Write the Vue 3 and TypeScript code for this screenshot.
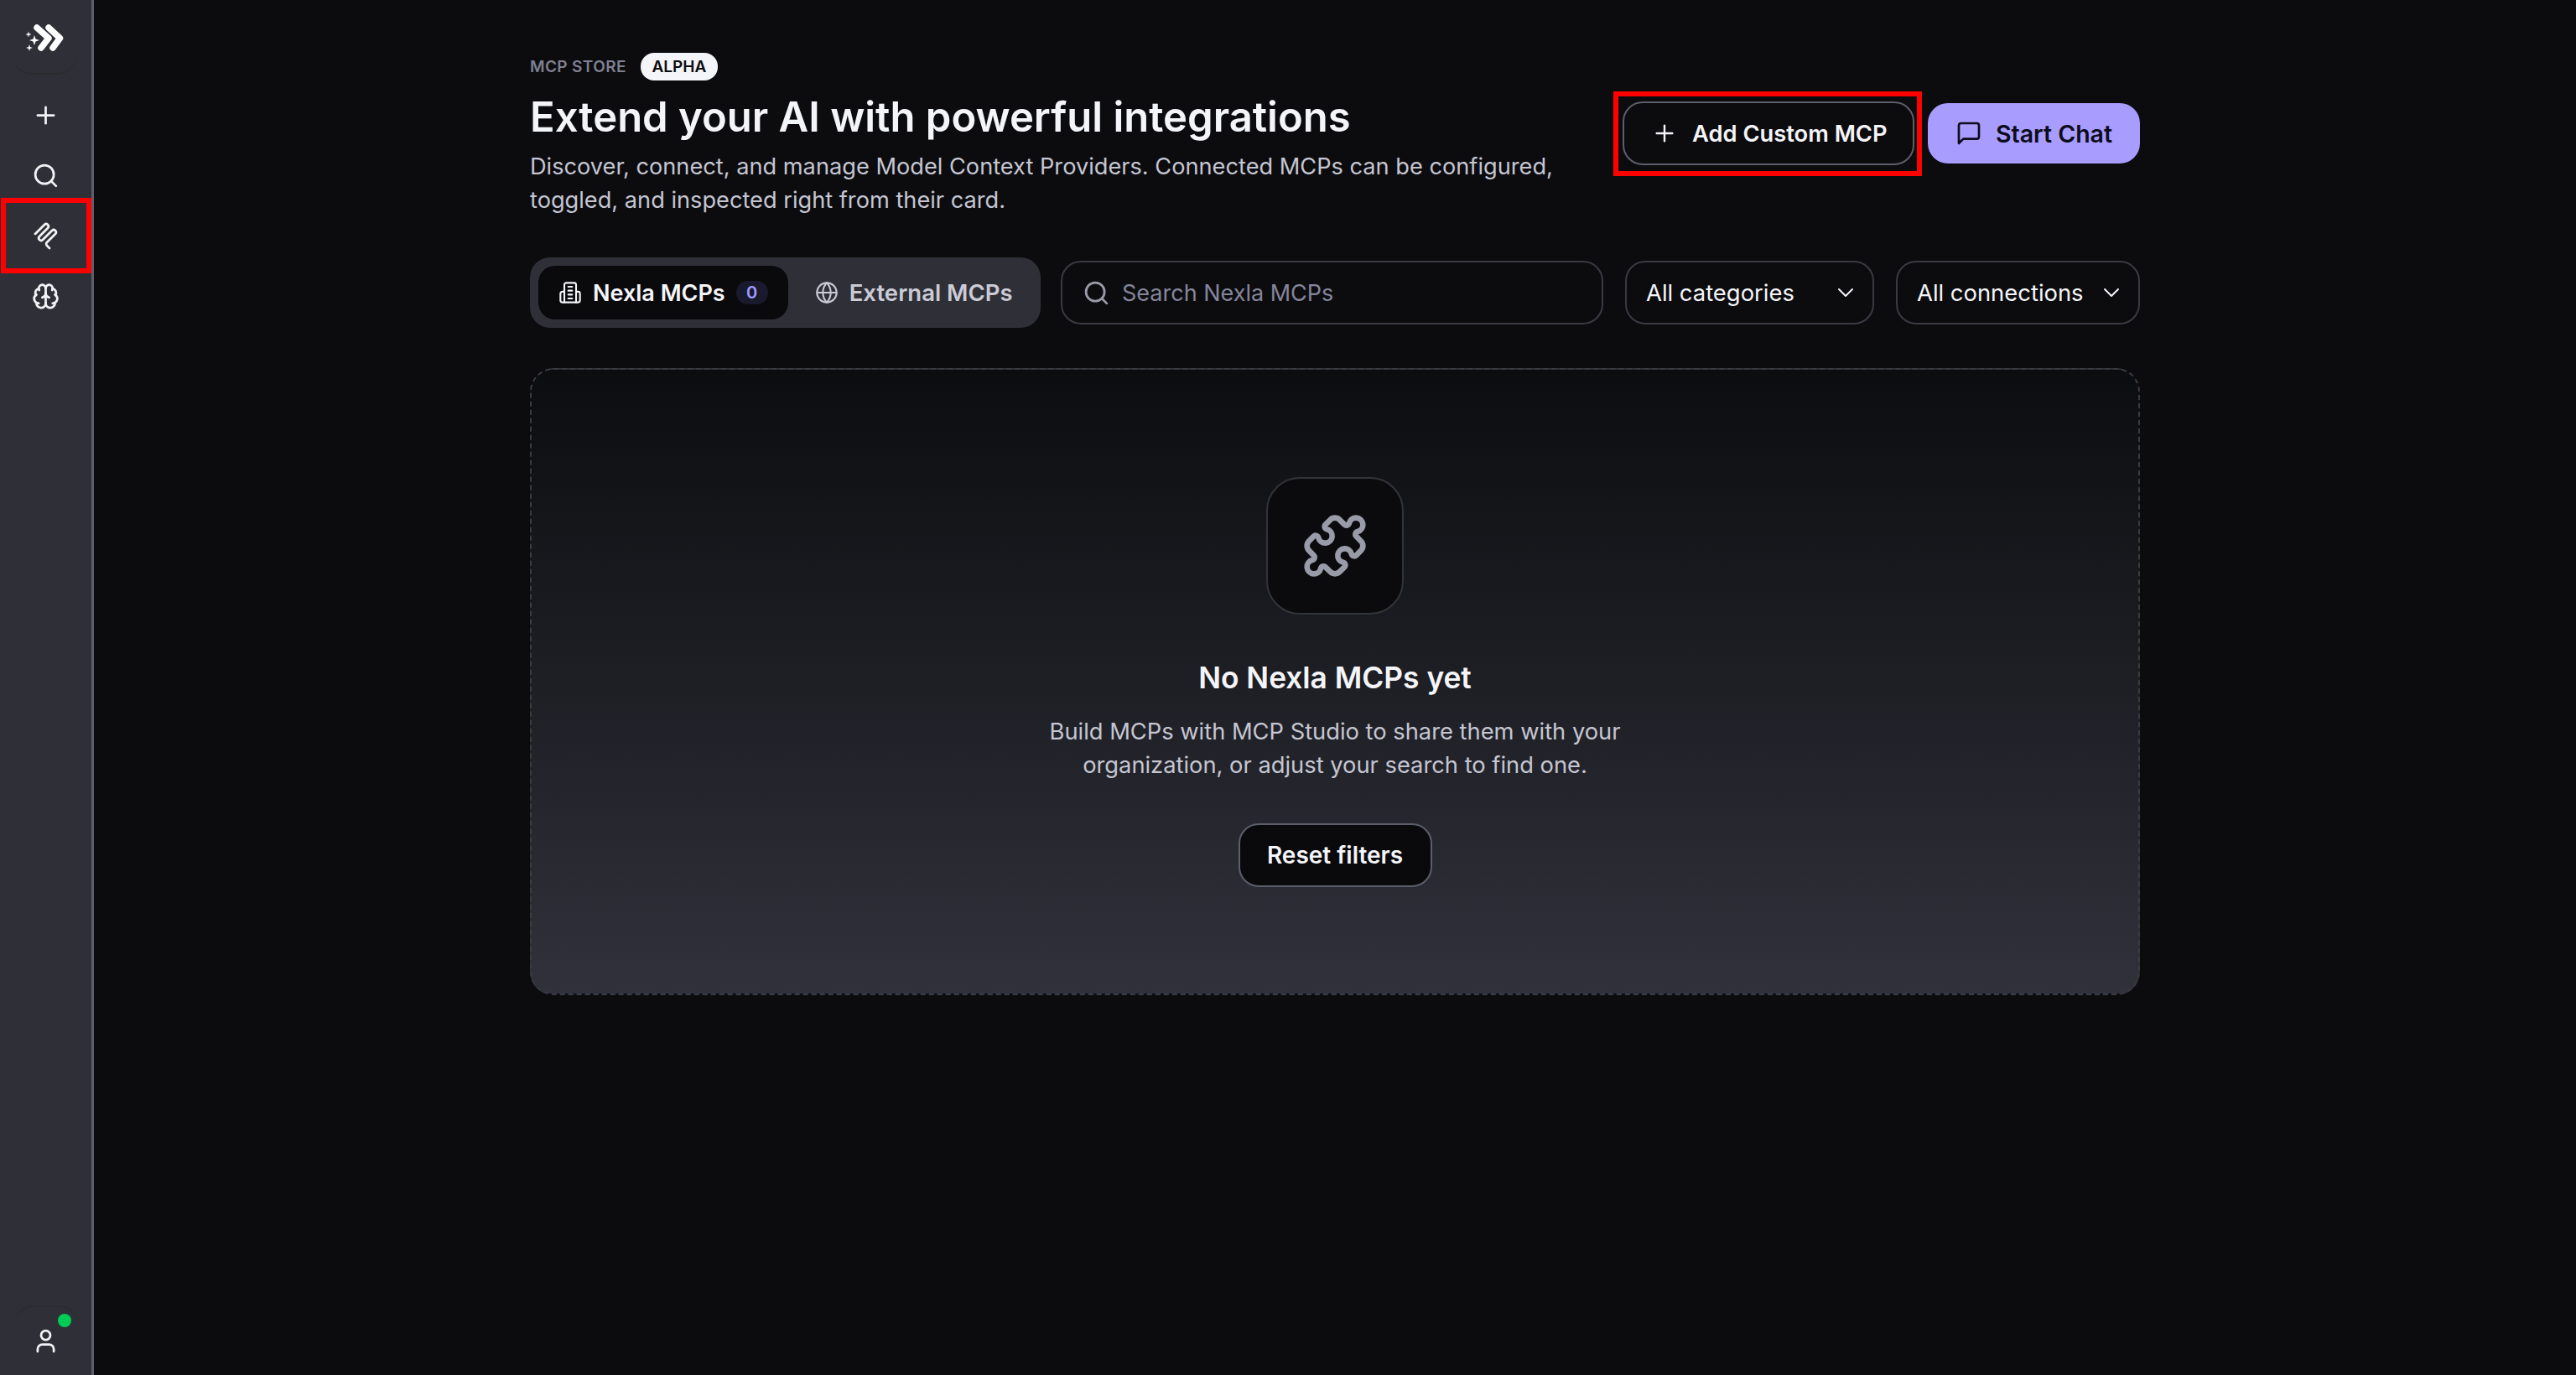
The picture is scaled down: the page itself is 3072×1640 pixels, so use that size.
<script setup lang="ts">
import { ref } from 'vue'

const search = ref('')
const navIcons = ['plus', 'search', 'mcp', 'brain']
</script>

<template>
  <div class="app-shell">
    <aside class="sidebar">
      <div class="logo-wrap">
        <svg class="logo" viewBox="0 0 46 34" fill="none">
          <path d="M14 5 L28 17.5 L19 29" stroke="#fff" stroke-width="7.5" stroke-linejoin="round" stroke-linecap="round" />
          <path d="M28 5 L41.5 17.5 L33 29" stroke="#fff" stroke-width="7.5" stroke-linejoin="round" stroke-linecap="round" />
          <path d="M11 14 L12.5 18.5 L17 20 L12.5 21.5 L11 26 L9.5 21.5 L5 20 L9.5 18.5 Z" fill="#fff" />
          <path d="M4 9.5 L4.8 12 L7.5 13 L4.8 14 L4 16.5 L3.2 14 L0.5 13 L3.2 12 Z" fill="#fff" />
          <path d="M5 25 L6 28 L9 29 L6 30 L5 33 L4 30 L1 29 L4 28 Z" fill="#fff" />
        </svg>
      </div>
      <nav class="nav">
        <button v-for="icon in navIcons" :key="icon" class="nav-item">
          <svg v-if="icon === 'plus'" class="nav-icon" viewBox="0 0 24 24">
            <path d="M5 12h14" /><path d="M12 5v14" />
          </svg>
          <svg v-else-if="icon === 'search'" class="nav-icon" viewBox="0 0 24 24">
            <circle cx="11" cy="11" r="8" /><path d="m21 21-4.3-4.3" />
          </svg>
          <svg v-else-if="icon === 'mcp'" class="nav-mcp" viewBox="0 0 30 33">
            <path d="M2 14 L13 3 A2.83 2.83 0 0 1 17 7 L7 17 A2.83 2.83 0 0 0 11 21 L22 10 A2.83 2.83 0 0 1 26 14 L16 24 A2.83 2.83 0 0 0 16 28 L19 31" />
          </svg>
          <svg v-else class="nav-icon" viewBox="0 0 24 24">
            <path d="M12 18V5" />
            <path d="M15 13a4.17 4.17 0 0 1-3-4 4.17 4.17 0 0 1-3 4" />
            <path d="M17.598 6.5A3 3 0 1 0 12 5a3 3 0 1 0-5.598 1.5" />
            <path d="M17.997 5.125a4 4 0 0 1 2.526 5.77" />
            <path d="M18 18a4 4 0 0 0 2-7.464" />
            <path d="M19.967 17.483A4 4 0 1 1 12 18a4 4 0 1 1-7.967-.517" />
            <path d="M6 18a4 4 0 0 1-2-7.464" />
            <path d="M6.003 5.125a4 4 0 0 0-2.526 5.77" />
          </svg>
          <span v-if="icon === 'mcp'" class="mark mark-nav"></span>
        </button>
      </nav>
      <div class="user-wrap">
        <span class="status-dot"></span>
        <svg class="nav-icon" viewBox="0 0 24 24">
          <path d="M19 21v-2a4 4 0 0 0-4-4H9a4 4 0 0 0-4 4v2" /><circle cx="12" cy="7" r="4" />
        </svg>
      </div>
    </aside>

    <main class="main">
      <div class="content">
        <header class="page-header">
          <div class="intro">
            <div class="eyebrow">
              <span class="eyebrow-text">MCP Store</span>
              <span class="alpha">ALPHA</span>
            </div>
            <h1>Extend your AI with powerful integrations</h1>
            <p>Discover, connect, and manage Model Context Providers. Connected MCPs can be configured, toggled, and inspected right from their card.</p>
          </div>
          <div class="actions">
            <button class="btn btn-outline">
              <span class="mark mark-add"></span>
              <svg class="btn-icon thin" viewBox="0 0 24 24"><path d="M5 12h14" /><path d="M12 5v14" /></svg>
              Add Custom MCP
            </button>
            <button class="btn btn-primary">
              <svg class="btn-icon" viewBox="0 0 24 24"><path d="M21 15a2 2 0 0 1-2 2H7l-4 4V5a2 2 0 0 1 2-2h14a2 2 0 0 1 2 2z" /></svg>
              Start Chat
            </button>
          </div>
        </header>

        <div class="toolbar">
          <div class="tabs">
            <button class="tab active">
              <svg class="tab-icon" viewBox="0 0 24 24">
                <path d="M6 22V4a2 2 0 0 1 2-2h8a2 2 0 0 1 2 2v18Z" />
                <path d="M6 11H4a2 2 0 0 0-2 2v7a2 2 0 0 0 2 2h2" />
                <path d="M18 11h2a2 2 0 0 1 2 2v7a2 2 0 0 1-2 2h-2" />
                <path d="M10 6h4" /><path d="M10 10h4" /><path d="M10 14h4" /><path d="M10 18h4" />
              </svg>
              Nexla MCPs
              <span class="count">0</span>
            </button>
            <button class="tab">
              <svg class="tab-icon" viewBox="0 0 24 24">
                <circle cx="12" cy="12" r="10" />
                <path d="M12 2a14.5 14.5 0 0 0 0 20 14.5 14.5 0 0 0 0-20" />
                <path d="M2 12h20" />
              </svg>
              External MCPs
            </button>
          </div>
          <label class="search">
            <svg class="search-icon" viewBox="0 0 24 24"><circle cx="11" cy="11" r="8" /><path d="m21 21-4.3-4.3" /></svg>
            <input v-model="search" placeholder="Search Nexla MCPs" />
          </label>
          <button class="select select-cat">
            All categories
            <svg class="chevron" viewBox="0 0 24 24"><path d="m6 9 6 6 6-6" /></svg>
          </button>
          <button class="select select-conn">
            All connections
            <svg class="chevron" viewBox="0 0 24 24"><path d="m6 9 6 6 6-6" /></svg>
          </button>
        </div>

        <section class="empty">
          <div class="empty-icon">
            <svg viewBox="0 0 24 24">
              <path d="M15.39 4.39a1 1 0 0 0 1.68-.474 2.5 2.5 0 1 1 3.014 3.015 1 1 0 0 0-.474 1.68l1.683 1.682a2.414 2.414 0 0 1 0 3.414L19.61 15.39a1 1 0 0 1-1.68-.474 2.5 2.5 0 1 0-3.014 3.015 1 1 0 0 1 .474 1.68l-1.683 1.682a2.414 2.414 0 0 1-3.414 0L8.61 19.61a1 1 0 0 0-1.68.474 2.5 2.5 0 1 1-3.014-3.015 1 1 0 0 0 .474-1.68l-1.683-1.682a2.414 2.414 0 0 1 0-3.414L4.39 8.61a1 1 0 0 1 1.68.474 2.5 2.5 0 1 0 3.014-3.015 1 1 0 0 1-.474-1.68l1.683-1.682a2.414 2.414 0 0 1 3.414 0z" />
            </svg>
          </div>
          <h2>No Nexla MCPs yet</h2>
          <p>Build MCPs with MCP Studio to share them with your organization, or adjust your search to find one.</p>
          <button class="btn btn-reset">Reset filters</button>
        </section>
      </div>
    </main>
  </div>
</template>

<style>
html,
body {
  margin: 0;
  background: #0c0c0f;
}
</style>

<style scoped>
.app-shell {
  display: flex;
  height: 1640px;
  overflow: hidden;
  background: #0c0c0f;
  color: #f4f5f8;
  font-family: Inter, "Liberation Sans", sans-serif;
}

button {
  font-family: inherit;
  cursor: pointer;
  white-space: nowrap;
}

svg {
  fill: none;
  stroke: currentColor;
  stroke-width: 2;
  stroke-linecap: round;
  stroke-linejoin: round;
  flex-shrink: 0;
}

/* red annotation frames from the screenshot */
.mark {
  position: absolute;
  border: 6px solid #ff0000;
  pointer-events: none;
}

.mark-nav {
  left: 1px;
  right: 0;
  top: -9px;
  bottom: -9px;
}

.mark-add {
  left: -13px;
  right: -11px;
  top: -14px;
  bottom: -15px;
}

.sidebar {
  width: 112px;
  flex-shrink: 0;
  box-sizing: border-box;
  display: flex;
  flex-direction: column;
  align-items: center;
  background: #2f3037;
  border-right: 3px solid #5d5e6c;
}

.logo-wrap {
  box-sizing: border-box;
  width: 78px;
  height: 89px;
  margin-right: 3px;
  display: flex;
  justify-content: center;
  padding-top: 28px;
  border-bottom: 2px solid #2b2c30;
  border-radius: 0 0 24px 24px;
}

.logo {
  width: 46px;
  height: 34px;
  stroke: none;
}

.nav {
  width: 100%;
  margin-top: 12px;
  display: flex;
  flex-direction: column;
}

.nav-item {
  position: relative;
  height: 72px;
  background: none;
  border: none;
  padding: 0;
  color: #f1f2f5;
  display: flex;
  align-items: center;
  justify-content: center;
}

.nav-icon {
  width: 33px;
  height: 33px;
}

.nav-mcp {
  width: 30px;
  height: 33px;
  stroke-width: 2.8;
}

.user-wrap {
  position: relative;
  box-sizing: border-box;
  width: 78px;
  height: 83px;
  margin-top: auto;
  display: flex;
  justify-content: center;
  padding-top: 24px;
  color: #f1f2f5;
  border-top: 2px solid #2b2c30;
  border-radius: 24px 24px 0 0;
}

.status-dot {
  position: absolute;
  right: 9px;
  top: 8px;
  width: 16px;
  height: 16px;
  border-radius: 50%;
  background: #00cc55;
}

.main {
  flex: 1;
  min-width: 0;
}

.content {
  box-sizing: border-box;
  width: 1920px;
  margin: 0 auto;
  padding-top: 63px;
}

.page-header {
  display: flex;
  justify-content: space-between;
  align-items: center;
}

.intro {
  width: 1240px;
}

.eyebrow {
  display: flex;
  align-items: center;
  gap: 17px;
  height: 33px;
}

.eyebrow-text {
  font-size: 19px;
  font-weight: 600;
  color: #7f8090;
  letter-spacing: 0.02em;
  text-transform: uppercase;
}

.alpha {
  box-sizing: border-box;
  height: 33px;
  width: 92px;
  border-radius: 16px;
  background: #f4f5f8;
  color: #0c0c0f;
  font-size: 19px;
  font-weight: 600;
  display: flex;
  align-items: center;
  justify-content: center;
}

h1 {
  margin: 16px 0 0;
  font-size: 49px;
  line-height: 56px;
  font-weight: 600;
}

.intro p {
  margin: 11px 0 0;
  font-size: 27.2px;
  line-height: 40px;
  color: #c5c6d2;
}

.actions {
  display: flex;
  align-items: center;
  gap: 16px;
  margin-bottom: 4px;
}

.btn {
  position: relative;
  box-sizing: border-box;
  display: inline-flex;
  align-items: center;
  justify-content: center;
  font-size: 28px;
  font-weight: 600;
  border-radius: 24px;
}

.btn-outline {
  width: 348px;
  height: 76px;
  padding-left: 32px;
  justify-content: flex-start;
  gap: 17px;
  background: #0c0c0f;
  border: 2px solid #5d5e6c;
  color: #f4f5f8;
  font-size: 27.3px;
}

.btn-primary {
  width: 253px;
  height: 72px;
  gap: 16px;
  background: #a89cff;
  border: none;
  color: #0c0c1a;
  font-size: 28.5px;
}

.btn-icon {
  width: 32px;
  height: 32px;
}

.btn-icon.thin {
  stroke-width: 1.8;
}

.toolbar {
  display: flex;
  align-items: center;
  margin-top: 48px;
}

.tabs {
  box-sizing: border-box;
  display: flex;
  width: 609px;
  height: 84px;
  padding: 10px;
  border-radius: 24px;
  background: #2f3037;
}

.tab {
  display: flex;
  align-items: center;
  gap: 13px;
  height: 64px;
  padding: 0 24px;
  border: none;
  border-radius: 20px;
  background: none;
  color: #cbcbd6;
  font-size: 27.5px;
  font-weight: 600;
}

.tab.active {
  width: 298px;
  box-sizing: border-box;
  background: #0a0a0d;
  color: #f4f5f8;
  font-size: 27px;
}

.tab:not(.active) {
  padding-left: 32px;
}

.tab-icon {
  width: 28px;
  height: 28px;
  stroke-width: 1.8;
}

.count {
  width: 38px;
  height: 28px;
  margin-left: auto;
  border-radius: 14px;
  background: #1a1a2e;
  color: #a09cff;
  font-size: 20px;
  display: flex;
  align-items: center;
  justify-content: center;
}

.search {
  box-sizing: border-box;
  width: 647px;
  height: 76px;
  margin-left: 24px;
  padding: 0 24px;
  display: flex;
  align-items: center;
  gap: 14px;
  border: 2px solid #3a3b42;
  border-radius: 24px;
}

.search-icon {
  width: 33px;
  height: 33px;
  color: #9a9ba8;
}

.search input {
  flex: 1;
  min-width: 0;
  padding: 0;
  background: none;
  border: none;
  outline: none;
  color: #f4f5f8;
  font-family: inherit;
  font-size: 27px;
}

.search input::placeholder {
  color: #85869a;
}

.select {
  box-sizing: border-box;
  height: 76px;
  margin-left: 26px;
  padding: 0 16px 0 23px;
  display: flex;
  align-items: center;
  justify-content: space-between;
  background: none;
  border: 2px solid #3a3b42;
  border-radius: 24px;
  color: #f4f5f8;
  font-size: 27.4px;
}

.select-cat {
  width: 297px;
}

.select-conn {
  width: 291px;
}

.chevron {
  width: 32px;
  height: 32px;
  stroke-width: 1.5;
}

.empty {
  box-sizing: border-box;
  height: 748px;
  margin-top: 48px;
  padding-top: 128px;
  display: flex;
  flex-direction: column;
  align-items: center;
  text-align: center;
  border: 2px dashed #3a3b42;
  border-radius: 28px;
  background: linear-gradient(180deg, #0c0d10 0%, #30313a 100%);
}

.empty-icon {
  box-sizing: border-box;
  width: 164px;
  height: 164px;
  display: flex;
  align-items: center;
  justify-content: center;
  background: #0b0b0e;
  border: 2px solid #33343a;
  border-radius: 40px;
  color: #9a9ba8;
}

.empty-icon svg {
  width: 80px;
  height: 80px;
}

h2 {
  margin: 54px 0 0;
  font-size: 35.3px;
  line-height: 44px;
  font-weight: 600;
}

.empty p {
  width: 720px;
  margin: 22px 0 0;
  font-size: 27.3px;
  line-height: 40px;
  color: #c5c6d2;
}

.btn-reset {
  width: 231px;
  height: 76px;
  margin-top: 49px;
  background: #0a0a0d;
  border: 2px solid #5d5e6c;
  color: #f4f5f8;
}
</style>
